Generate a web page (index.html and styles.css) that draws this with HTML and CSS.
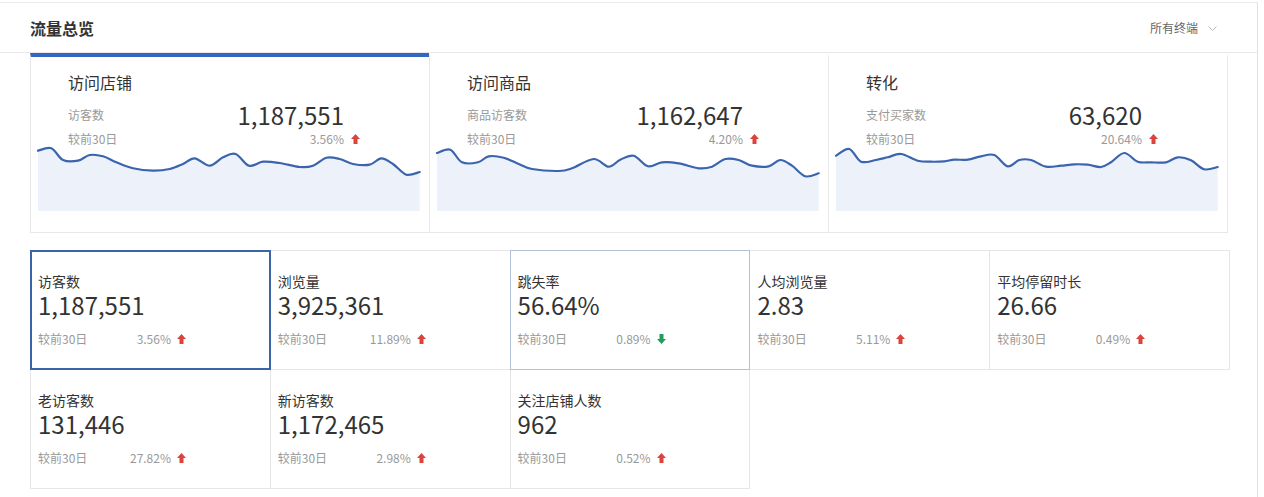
FILE: index.html
```html
<!DOCTYPE html>
<html lang="zh-CN">
<head>
<meta charset="utf-8">
<title>流量总览</title>
<link rel="stylesheet" href="styles.css">
</head>
<body>
<div class="panel">
  <div class="hd">
    <div class="hd-title">流量总览</div>
    <div class="hd-select">所有终端<svg class="chev" width="9" height="6" viewBox="0 0 9 6"><polyline points="0.5,0.5 4.5,4.5 8.5,0.5" fill="none" stroke="#bbb" stroke-width="1"/></svg></div>
  </div>

  <div class="cards">
    <div class="card active">
      <div class="card-title">访问店铺</div>
      <div class="kv"><span class="k">访客数</span><span class="v">1,187,551</span></div>
      <div class="kc"><span class="k">较前30日</span><span class="p">3.56%</span><svg class="arrow" viewBox="0 0 9 10"><polygon points="4.5,0 9,5 6.5,5 6.5,10 2.5,10 2.5,5 0,5" fill="#d9443d"/></svg></div>
      <svg class="spark" width="382" height="64" viewBox="0 0 382 64" data-points="0,3.7 13.3,1.3 25,13 40,13.7 51.7,8 65,9.3 78.3,15.3 95,21.3 115,23.7 131.7,22 145,17 156.7,11.3 171.7,18.7 185,10.3 197.7,7 211,18.7 225,14.7 241.7,16 261.7,20 275,18.7 288.3,10.7 301.7,12 315,17 331.7,17.7 343.3,11.3 355,17 368.3,27.7 381.7,25"><path class="area" d=""/><path class="line" d=""/></svg>
    </div>
    <div class="card">
      <div class="card-title">访问商品</div>
      <div class="kv"><span class="k">商品访客数</span><span class="v">1,162,647</span></div>
      <div class="kc"><span class="k">较前30日</span><span class="p">4.20%</span><svg class="arrow" viewBox="0 0 9 10"><polygon points="4.5,0 9,5 6.5,5 6.5,10 2.5,10 2.5,5 0,5" fill="#d9443d"/></svg></div>
      <svg class="spark" width="382" height="64" viewBox="0 0 382 64" data-points="0,6 13.3,2.7 25,15.3 41,15.3 51.7,9.3 66.7,10.7 81.7,17 95,22 121.7,24 135,21.3 156.7,12 171.7,19.7 183.3,12.7 196.7,8.7 211,19.3 225,15.3 241.7,16.3 261.7,21.3 275,19.7 288.3,12 301.7,13 315,18.7 331.7,19.3 343.3,13 355,18.7 368.3,29.3 381.7,26.3"><path class="area" d=""/><path class="line" d=""/></svg>
    </div>
    <div class="card">
      <div class="card-title">转化</div>
      <div class="kv"><span class="k">支付买家数</span><span class="v">63,620</span></div>
      <div class="kc"><span class="k">较前30日</span><span class="p">20.64%</span><svg class="arrow" viewBox="0 0 9 10"><polygon points="4.5,0 9,5 6.5,5 6.5,10 2.5,10 2.5,5 0,5" fill="#d9443d"/></svg></div>
      <svg class="spark" width="382" height="64" viewBox="0 0 382 64" data-points="0,8.7 13.3,2 25,14.7 40,13 51.7,10.3 65,7 81.7,13.7 95,14.7 108.3,14.3 118.3,12.7 131.7,12.7 145,9.3 158.3,8 171.7,19.3 183.3,13 195,13 210,19.7 225,18.7 238.3,17.3 251.7,17.7 265,20 275,15.3 288.3,6 301.7,14.7 315,15.3 330,15.3 341.7,10.3 355,13.3 368.3,22.3 381.7,20"><path class="area" d=""/><path class="line" d=""/></svg>
    </div>
  </div>

  <div class="grid">
    <div class="cell selected">
      <div class="c-label">访客数</div>
      <div class="c-value">1,187,551</div>
      <div class="cmp"><span class="k">较前30日</span><span class="p">3.56%</span><svg class="arrow" viewBox="0 0 9 10"><polygon points="4.5,0 9,5 6.5,5 6.5,10 2.5,10 2.5,5 0,5" fill="#d9443d"/></svg></div>
    </div>
    <div class="cell">
      <div class="c-label">浏览量</div>
      <div class="c-value">3,925,361</div>
      <div class="cmp"><span class="k">较前30日</span><span class="p">11.89%</span><svg class="arrow" viewBox="0 0 9 10"><polygon points="4.5,0 9,5 6.5,5 6.5,10 2.5,10 2.5,5 0,5" fill="#d9443d"/></svg></div>
    </div>
    <div class="cell hover">
      <div class="c-label">跳失率</div>
      <div class="c-value">56.64%</div>
      <div class="cmp"><span class="k">较前30日</span><span class="p">0.89%</span><svg class="arrow" viewBox="0 0 9 10"><polygon points="4.5,10 9,5 6.5,5 6.5,0 2.5,0 2.5,5 0,5" fill="#1f9d5c"/></svg></div>
    </div>
    <div class="cell">
      <div class="c-label">人均浏览量</div>
      <div class="c-value">2.83</div>
      <div class="cmp"><span class="k">较前30日</span><span class="p">5.11%</span><svg class="arrow" viewBox="0 0 9 10"><polygon points="4.5,0 9,5 6.5,5 6.5,10 2.5,10 2.5,5 0,5" fill="#d9443d"/></svg></div>
    </div>
    <div class="cell">
      <div class="c-label">平均停留时长</div>
      <div class="c-value">26.66</div>
      <div class="cmp"><span class="k">较前30日</span><span class="p">0.49%</span><svg class="arrow" viewBox="0 0 9 10"><polygon points="4.5,0 9,5 6.5,5 6.5,10 2.5,10 2.5,5 0,5" fill="#d9443d"/></svg></div>
    </div>
    <div class="cell">
      <div class="c-label">老访客数</div>
      <div class="c-value">131,446</div>
      <div class="cmp"><span class="k">较前30日</span><span class="p">27.82%</span><svg class="arrow" viewBox="0 0 9 10"><polygon points="4.5,0 9,5 6.5,5 6.5,10 2.5,10 2.5,5 0,5" fill="#d9443d"/></svg></div>
    </div>
    <div class="cell">
      <div class="c-label">新访客数</div>
      <div class="c-value">1,172,465</div>
      <div class="cmp"><span class="k">较前30日</span><span class="p">2.98%</span><svg class="arrow" viewBox="0 0 9 10"><polygon points="4.5,0 9,5 6.5,5 6.5,10 2.5,10 2.5,5 0,5" fill="#d9443d"/></svg></div>
    </div>
    <div class="cell">
      <div class="c-label">关注店铺人数</div>
      <div class="c-value">962</div>
      <div class="cmp"><span class="k">较前30日</span><span class="p">0.52%</span><svg class="arrow" viewBox="0 0 9 10"><polygon points="4.5,0 9,5 6.5,5 6.5,10 2.5,10 2.5,5 0,5" fill="#d9443d"/></svg></div>
    </div>
  </div>
</div>
<script src="script.js"></script>
</body>
</html>
```

FILE: styles.css
```css
html, body {
  margin: 0;
  padding: 0;
  background: #fff;
}
body {
  font-family: "Noto Sans CJK SC", "Noto Sans", sans-serif;
  color: #333;
}
.panel {
  margin-top: 2px;
  width: 1258px;
  height: 495px;
  box-sizing: border-box;
  border-top: 1px solid #e9e9e9;
  border-right: 1px solid #e2e2e2;
}
.hd {
  height: 49px;
  border-bottom: 1px solid #e8e8e8;
  display: flex;
  align-items: center;
  justify-content: space-between;
  padding: 0 40px 0 30px;
}
.hd-title {
  font-size: 16px;
  font-weight: bold;
  color: #333;
  line-height: 24px;
}
.hd-select {
  font-size: 12px;
  color: #666;
  display: flex;
  align-items: center;
}
.chev {
  margin-left: 10px;
  margin-top: 2px;
}
.cards {
  display: flex;
  padding-left: 30px;
}
.card {
  width: 400px;
  height: 180px;
  box-sizing: border-box;
  margin-right: -1px;
  border: 1px solid #e8e8e8;
  border-top: 4px solid #fff;
}
.card.active {
  border-top-color: #3366c2;
}
.card-title {
  margin-top: 13px;
  padding-left: 37px;
  font-size: 16px;
  line-height: 24px;
  color: #333;
}
.kv, .kc {
  display: flex;
  align-items: center;
  margin-left: 37px;
}
.kv {
  margin-top: 9px;
  height: 24px;
  width: 276px;
}
.kc {
  margin-top: 4px;
  height: 16px;
  width: 292px;
}
.k {
  font-size: 12px;
  line-height: 16px;
  color: #999;
}
.kv .v {
  margin-left: auto;
  font-size: 24px;
  line-height: 24px;
  color: #333;
}
.kc .p, .cmp .p {
  margin-left: auto;
  font-size: 12px;
  line-height: 16px;
  color: #999;
}
.kc .arrow {
  margin-left: 7px;
}
.arrow {
  width: 9px;
  height: 10px;
  display: block;
}
.spark {
  display: block;
  margin-left: 7px;
  overflow: visible;
}
.spark .area {
  fill: #edf2fa;
  stroke: none;
}
.spark .line {
  fill: none;
  stroke: #3a64ad;
  stroke-width: 2.2;
  stroke-linejoin: round;
  stroke-linecap: round;
}
.grid {
  margin-top: 17px;
  padding-left: 30px;
  display: flex;
  flex-wrap: wrap;
  width: 1210px;
}
.cell {
  width: 240.8px;
  height: 120px;
  box-sizing: border-box;
  margin: 0 -1px -1px 0;
  border: 1px solid #e6e6e6;
  padding: 20px 0 0 7px;
}
.cell.selected {
  position: relative;
  z-index: 2;
  border-color: #3b64a8;
  box-shadow: inset 0 0 0 1px #3b64a8;
}
.cell.hover {
  position: relative;
  z-index: 1;
  border-color: #b3c0d5;
}
.c-label {
  font-size: 14px;
  line-height: 20px;
  color: #333;
}
.c-value {
  font-size: 24px;
  line-height: 28px;
  color: #333;
}
.cmp {
  margin-top: 12px;
  height: 16px;
  width: 148px;
  display: flex;
  align-items: center;
}
.cmp .arrow {
  margin-left: 6px;
}
```

FILE: script.js
```js
document.querySelectorAll('svg.spark').forEach(function (svg) {
  var pts = svg.getAttribute('data-points').trim().split(/\s+/).map(function (p) {
    return p.split(',').map(Number);
  });
  var h = 64;
  var d = 'M' + pts[0][0] + ',' + pts[0][1];
  for (var i = 0; i < pts.length - 1; i++) {
    var p0 = pts[i - 1] || pts[i];
    var p1 = pts[i];
    var p2 = pts[i + 1];
    var p3 = pts[i + 2] || p2;
    var t = 1 / 6;
    var c1x = p1[0] + (p2[0] - p0[0]) * t;
    var c1y = p1[1] + (p2[1] - p0[1]) * t;
    var c2x = p2[0] - (p3[0] - p1[0]) * t;
    var c2y = p2[1] - (p3[1] - p1[1]) * t;
    d += ' C' + c1x.toFixed(2) + ',' + c1y.toFixed(2) + ' ' + c2x.toFixed(2) + ',' + c2y.toFixed(2) + ' ' + p2[0] + ',' + p2[1];
  }
  var last = pts[pts.length - 1];
  svg.querySelector('.area').setAttribute('d', d + ' L' + last[0] + ',' + h + ' L' + pts[0][0] + ',' + h + ' Z');
  svg.querySelector('.line').setAttribute('d', d);
});
```
